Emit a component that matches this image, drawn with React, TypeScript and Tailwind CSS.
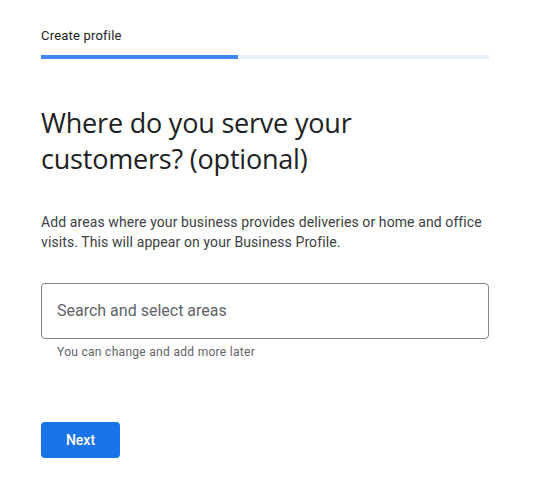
export default function App() {
  return (
    <div className="min-h-[493px] w-full bg-white font-['Roboto',sans-serif]">
      <div className="w-[448px] ml-[41px] pt-[28px]">
        <p className="text-[13px] leading-[16px] text-[#202124] tracking-[0.2px]">
          Create profile
        </p>
        <div className="mt-[11px] flex h-[4px] w-full bg-[#e8f0fe]">
          <div className="h-full w-[197px] bg-[#4285f4]" />
        </div>

        <h1 className="mt-[46px] max-w-[345px] text-[27px] leading-[36px] text-[#202124] font-['Open_Sans',sans-serif] tracking-[-0.2px]">
          Where do you serve your customers? (optional)
        </h1>

        <p className="mt-[35px] text-[14px] leading-[20px] text-[#3c4043] tracking-[0.1px]">
          Add areas where your business provides deliveries or home and office
          visits. This will appear on your Business Profile.
        </p>

        <div className="mt-[31px] flex h-[56px] items-center rounded-[4px] border border-[#80868b] px-[15px]">
          <span className="text-[16px] text-[#5f6368]">Search and select areas</span>
        </div>
        <p className="mt-[5px] pl-[16px] text-[12px] leading-[16px] text-[#5f6368] tracking-[0.3px]">
          You can change and add more later
        </p>

        <button className="mt-[62px] h-[36px] w-[79px] rounded-[4px] bg-[#1a73e8] text-[14px] font-medium text-white">
          Next
        </button>
      </div>
    </div>
  );
}
